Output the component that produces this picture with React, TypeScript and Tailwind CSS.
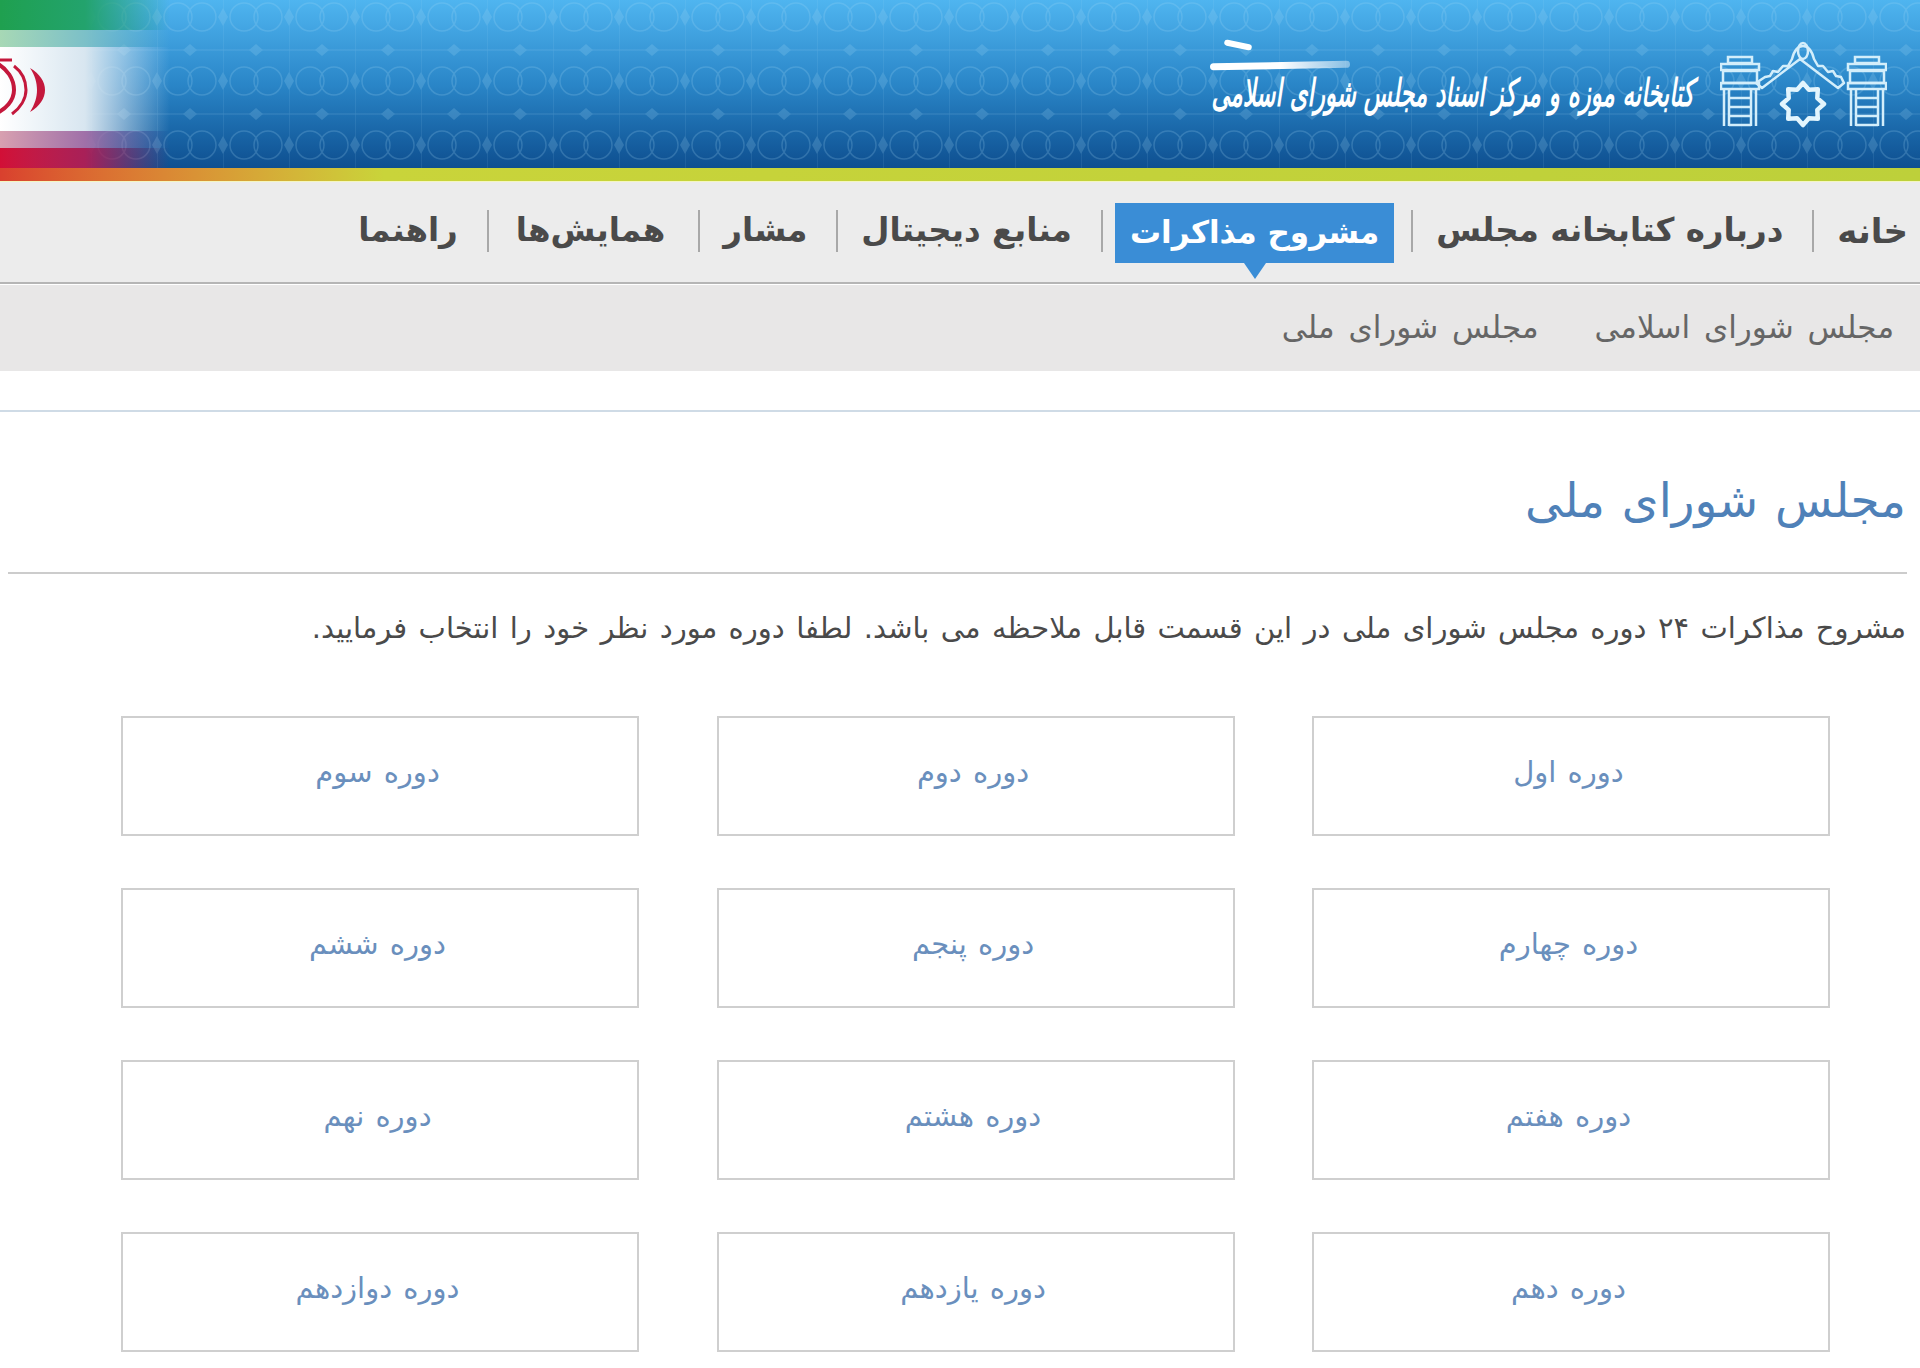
import React from 'react';

const navItems = ['خانه', 'درباره کتابخانه مجلس', 'مشروح مذاکرات', 'منابع دیجیتال', 'مشار', 'همایش‌ها', 'راهنما'];

const terms = [
  'دوره اول', 'دوره دوم', 'دوره سوم',
  'دوره چهارم', 'دوره پنجم', 'دوره ششم',
  'دوره هفتم', 'دوره هشتم', 'دوره نهم',
  'دوره دهم', 'دوره یازدهم', 'دوره دوازدهم',
];

// eight pointed star of the logo
const starPoints = Array.from({ length: 16 }, (_, i) => {
  const r = i % 2 === 0 ? 21 : 15.5;
  const a = (i * Math.PI) / 8;
  return `${(83 + r * Math.sin(a)).toFixed(1)},${(72 - r * Math.cos(a)).toFixed(1)}`;
}).join(' ');

const Tower = ({ x }: { x: number }) => (
  <g transform={`translate(${x} 0)`} fill="none" stroke="#d3eefb" strokeWidth="2.5">
    <rect x="8" y="25" width="24" height="6" />
    <rect x="1" y="32" width="38" height="6" />
    <rect x="3" y="39" width="34" height="12" />
    <rect x="1" y="51" width="38" height="6" />
    <path d="M4 57v37M36 57v37M9 57v37M31 57v37M9 66h22M9 75h22M9 84h22M9 93h22" />
  </g>
);

const Emblem = () => (
  <svg viewBox="0 0 167 96" className="w-[167px] h-[96px] shrink-0">
    <Tower x={0} />
    <Tower x={127} />
    <g fill="none" stroke="#d3eefb" strokeWidth="2.5" strokeLinejoin="round">
      <path d="M45 45l5-1 3-5 5 1 5-6 5 0 4-7c2-8 6-13 11-13s9 5 11 13l4 7 5 0 5 6 5-1 3 5 5 1 3 6-6 5-38-29-38 29-6-5z" />
      <ellipse cx="83" cy="19" rx="5" ry="8" />
    </g>
    <polygon points={starPoints} fill="none" stroke="#e3f5fd" strokeWidth="4.5" strokeLinejoin="round" />
  </svg>
);

const FlagEmblem = () => (
  <svg viewBox="0 0 50 66" className="w-[50px] h-[66px]" fill="none" stroke="#c4183c">
    <path d="M0 4h12" strokeWidth="3" />
    <path d="M-6 6c14 6 20 18 20 28s-8 20-20 24" strokeWidth="4" />
    <path d="M14 10c8 6 12 15 12 24s-6 18-14 24" strokeWidth="3" />
    <path d="M30 12c10 6 15 14 15 22s-5 16-15 22c5-8 7-15 7-22s-2-15-7-22z" fill="#c4183c" stroke="none" />
  </svg>
);

export default function App() {
  return (
    <div dir="rtl" className="min-h-[1368px] bg-white font-['DejaVu_Sans',sans-serif] overflow-hidden">
      {/* Header banner */}
      <header className="relative h-[168px] bg-gradient-to-b from-[#4fb5f0] via-[#2a86c8] to-[#0e4f90] overflow-hidden">
        <svg className="absolute inset-0 w-full h-full opacity-20" aria-hidden="true">
          <defs>
            <pattern id="tile" width="66" height="64" patternUnits="userSpaceOnUse" patternTransform="translate(25 17)">
              <path d="M0 0v64M0 33h66" stroke="#a9dcf7" strokeWidth="1" fill="none" />
              <g stroke="#a9dcf7" strokeWidth="1.5" fill="none">
                <circle cx="21" cy="0" r="14" />
                <circle cx="45" cy="0" r="14" />
                <circle cx="21" cy="64" r="14" />
                <circle cx="45" cy="64" r="14" />
              </g>
              <g fill="#a9dcf7">
                <path d="M0 -9l5 9-5 9-5-9z" />
                <path d="M66 -9l5 9-5 9-5-9z" />
                <path d="M0 55l5 9-5 9-5-9z" />
                <path d="M66 55l5 9-5 9-5-9z" />
                <path d="M33 27l7 6-7 6-7-6z" />
              </g>
            </pattern>
          </defs>
          <rect width="100%" height="100%" fill="url(#tile)" />
        </svg>

        {/* Flag fade at the far end */}
        <div className="absolute left-0 top-0 w-[170px] h-[168px] flex flex-col">
          <div className="h-[30px] bg-gradient-to-r from-[#1fa04f] via-[#23a36d] to-transparent" />
          <div className="h-[17px] bg-gradient-to-r from-[#a7d8b5] via-[#7cc0c8] to-transparent" />
          <div className="relative h-[84px] bg-gradient-to-r from-white via-[#d8e6f0] to-transparent">
            <div className="absolute left-0 top-[9px]" dir="ltr">
              <FlagEmblem />
            </div>
          </div>
          <div className="h-[17px] bg-gradient-to-r from-[#d8a0b0] via-[#a070a8] to-transparent" />
          <div className="h-[20px] bg-gradient-to-r from-[#d20f36] via-[#a82058] to-transparent" />
        </div>

        {/* Logo */}
        <div className="relative flex items-start pt-[32px] pr-[33px] gap-[26px]">
          <Emblem />
          <div className="relative w-[484px] h-[96px] text-white">
            <div className="absolute left-0 top-[30px] w-[140px] h-[7px] rounded-full bg-gradient-to-r from-white via-white to-white/40 -rotate-1" />
            <div className="absolute left-[14px] top-[10px] w-[28px] h-[6px] rounded-full bg-white rotate-12" />
            <span className="absolute right-0 top-[36px] inline-block origin-right scale-x-[0.6] italic font-bold text-[38px] leading-[50px] whitespace-nowrap">
              کتابخانه موزه و مرکز اسناد مجلس شورای اسلامی
            </span>
          </div>
        </div>
      </header>

      <div className="h-[14px] bg-gradient-to-r from-[#d9402e] via-[#c9d43a] via-[20%] to-[#bdd03a] border-b border-[#f4f6c0]" />

      {/* Main nav */}
      <nav className="relative h-[102px] bg-[#ececec] border-b-2 border-[#b5b5b5] flex items-center pr-[12px] pb-[3px]">
        {navItems.map((item, i) => (
          <React.Fragment key={item}>
            {i > 0 && <span className="w-[2px] h-[42px] bg-[#a8a8a8] mr-[23px] ml-[29px]" />}
            {item === 'مشروح مذاکرات' ? (
              <span className="relative -mr-[12px] -ml-[11px] translate-y-[2px] h-[60px] px-[15px] flex items-center bg-[#3a8dd6] text-white text-[31px] font-bold leading-none whitespace-nowrap">
                {item}
                <span className="absolute left-1/2 -translate-x-1/2 top-full w-0 h-0 border-x-[11px] border-x-transparent border-t-[16px] border-t-[#3a8dd6]" />
              </span>
            ) : (
              <span
                className={
                  item === 'خانه'
                    ? 'text-[34px] font-bold text-[#4a4a4a] leading-none whitespace-nowrap'
                    : item === 'همایش‌ها'
                      ? 'px-[4px] text-[32.5px] font-bold text-[#4a4a4a] leading-none whitespace-nowrap'
                      : 'text-[32.5px] font-bold text-[#4a4a4a] leading-none whitespace-nowrap'
                }
              >
                {item}
              </span>
            )}
          </React.Fragment>
        ))}
      </nav>

      {/* Sub nav */}
      <div className="h-[86px] bg-[#e8e7e7] flex items-center pr-[26px] pb-[2px] gap-[56px] text-[31px] [word-spacing:4px] text-[#666666] mt-px">
        <span>مجلس شورای اسلامی</span>
        <span>مجلس شورای ملی</span>
      </div>

      <div className="mt-[39px] border-t-2 border-[#cfdbe6]" />

      <main className="px-[14px]">
        <h1 className="h-[160px] flex items-center text-[47px] [word-spacing:2px] text-[#4f81b8] pt-[18px]">مجلس شورای ملی</h1>
        <div className="border-t-2 border-[#cccccc] -mr-px -ml-[6px]" />
        <p className="mt-[37px] text-[29px] [word-spacing:2.2px] leading-[34px] text-[#4a4a4a] whitespace-nowrap">
          مشروح مذاکرات ۲۴ دوره مجلس شورای ملی در این قسمت قابل ملاحظه می باشد. لطفا دوره مورد نظر خود را انتخاب فرمایید.
        </p>

        <div className="mt-[71px] pr-[76px] grid grid-cols-[518px_518px_518px] gap-x-[77.5px] gap-y-[52px]">
          {terms.map(term => (
            <a key={term} className="h-[120px] border-2 border-[#cfcfcf] flex items-center justify-center pb-[6px] pr-[5px] text-[29px] [word-spacing:2px] text-[#6a8fbd]">
              {term}
            </a>
          ))}
        </div>
      </main>
    </div>
  );
}
